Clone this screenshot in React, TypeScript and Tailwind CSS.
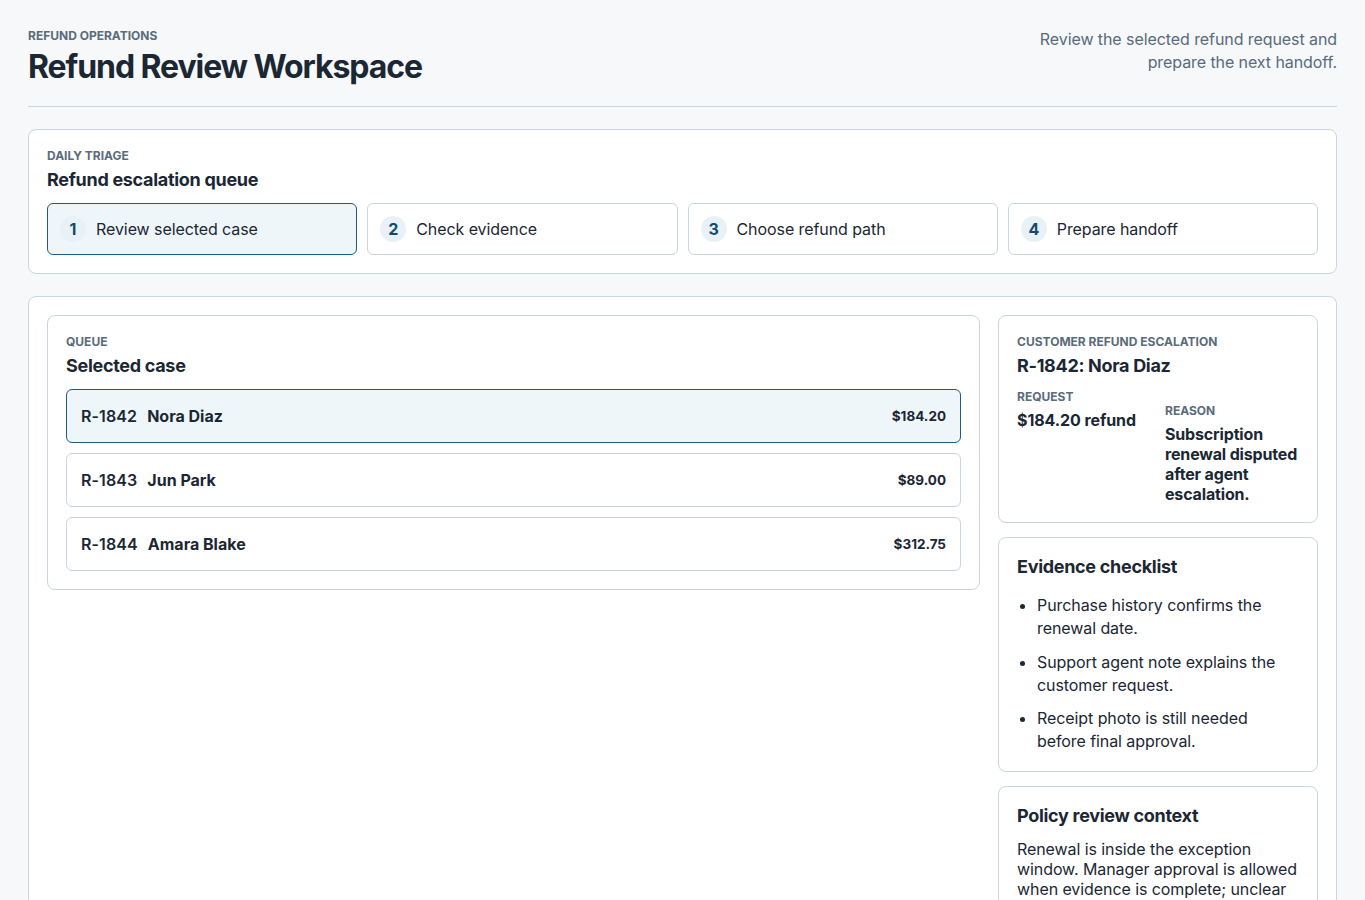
import React from "react";

const steps = ["Review selected case", "Check evidence", "Choose refund path", "Prepare handoff"];

const cases = [
  { id: "R-1842", name: "Nora Diaz", amount: "$184.20", selected: true },
  { id: "R-1843", name: "Jun Park", amount: "$89.00", selected: false },
  { id: "R-1844", name: "Amara Blake", amount: "$312.75", selected: false },
];

const evidence = [
  "Purchase history confirms the renewal date.",
  "Support agent note explains the customer request.",
  "Receipt photo is still needed before final approval.",
];

function Eyebrow({ children }: { children: React.ReactNode }) {
  return <p className="text-xs leading-[16px] font-bold uppercase tracking-normal text-[#5a6b7b]">{children}</p>;
}

export default function App() {
  return (
    <div className="min-h-screen bg-[#f6f8fa] px-7 pt-7 pb-7 text-[#1b2733] tracking-[-0.08px] font-['Inter',sans-serif]">
      {/* Header */}
      <header className="flex items-start justify-between border-b border-[#c9d5e0] pb-5">
        <div>
          <Eyebrow>Refund operations</Eyebrow>
          <h1 className="mt-1 text-[32px] leading-[38px] font-bold tracking-[-1.07px]">Refund Review Workspace</h1>
        </div>
        <p className="w-[320px] text-right text-base leading-[23.2px] text-[#5a6b7b]">
          Review the selected refund request and prepare the next handoff.
        </p>
      </header>

      {/* Triage */}
      <section className="mt-[22px] rounded-lg border border-[#c9d5e0] bg-white p-[18px]">
        <Eyebrow>Daily triage</Eyebrow>
        <h2 className="mt-[3px] text-lg leading-[26px] font-bold tracking-[-0.3px]">Refund escalation queue</h2>
        <div className="mt-[10px] grid grid-cols-4 gap-[10px]">
          {steps.map((step, idx) => (
            <div
              key={step}
              className={`flex h-[52px] items-center gap-[10px] rounded-md border px-3 ${
                idx === 0 ? "border-[#1f5a85] bg-[#eff6fa]" : "border-[#c9d5e0] bg-white"
              }`}
            >
              <span className="flex h-[26px] w-[26px] items-center justify-center rounded-full bg-[#e8f1f6] text-base font-bold text-[#134a6e]">
                {idx + 1}
              </span>
              <span className="text-base">{step}</span>
            </div>
          ))}
        </div>
      </section>

      {/* Workspace */}
      <section className="mt-[22px] grid grid-cols-[1fr_320px] items-start gap-[18px] rounded-lg border border-[#c9d5e0] bg-white p-[18px]">
        <div className="rounded-lg border border-[#c9d5e0] bg-white p-[18px]">
          <Eyebrow>Queue</Eyebrow>
          <h2 className="mt-[3px] text-lg leading-[26px] font-bold tracking-[-0.3px]">Selected case</h2>
          <div className="mt-[10px] flex flex-col gap-[10px]">
            {cases.map((c) => (
              <div
                key={c.id}
                className={`flex h-[54px] items-center justify-between rounded-md border px-[14px] ${
                  c.selected ? "border-[#1f5a85] bg-[#eff6fa]" : "border-[#c9d5e0] bg-white"
                }`}
              >
                <div className="flex items-center gap-[10px] text-base font-bold tracking-normal">
                  <span className="font-semibold tracking-[0.1px]">{c.id}</span>
                  <span>{c.name}</span>
                </div>
                <span className="text-[13.5px] font-bold tracking-normal">{c.amount}</span>
              </div>
            ))}
          </div>
        </div>

        <div className="flex flex-col gap-[14px]">
          <div className="rounded-lg border border-[#c9d5e0] bg-white p-[18px]">
            <Eyebrow>Customer refund escalation</Eyebrow>
            <h2 className="mt-[3px] text-lg leading-[26px] font-bold tracking-[-0.3px]">R-1842: Nora Diaz</h2>
            <div className="mt-[10px] grid grid-cols-2 items-start gap-[14px]">
              <div>
                <Eyebrow>Request</Eyebrow>
                <p className="mt-[5px] text-base leading-5 font-bold">$184.20 refund</p>
              </div>
              <div className="mt-[14px]">
                <Eyebrow>Reason</Eyebrow>
                <p className="mt-[5px] text-base leading-5 font-bold tracking-[-0.16px]">
                  Subscription renewal disputed after agent escalation.
                </p>
              </div>
            </div>
          </div>

          <div className="rounded-lg border border-[#c9d5e0] bg-white px-[18px] pt-[18px] pb-[17.5px]">
            <h2 className="text-lg leading-[22px] font-bold tracking-[-0.3px]">Evidence checklist</h2>
            <ul className="mt-4 flex list-disc flex-col gap-[10.2px] pl-5 text-base leading-[23.2px]">
              {evidence.map((item) => (
                <li key={item}>{item}</li>
              ))}
            </ul>
          </div>

          <div className="rounded-lg border border-[#c9d5e0] bg-white p-[18px]">
            <h2 className="text-lg leading-[22px] font-bold tracking-[-0.3px]">Policy review context</h2>
            <p className="mt-[12px] text-base leading-5">
              Renewal is inside the exception window. Manager approval is allowed when evidence is complete; unclear
              cases stay with the review team.
            </p>
          </div>
        </div>
      </section>
    </div>
  );
}
